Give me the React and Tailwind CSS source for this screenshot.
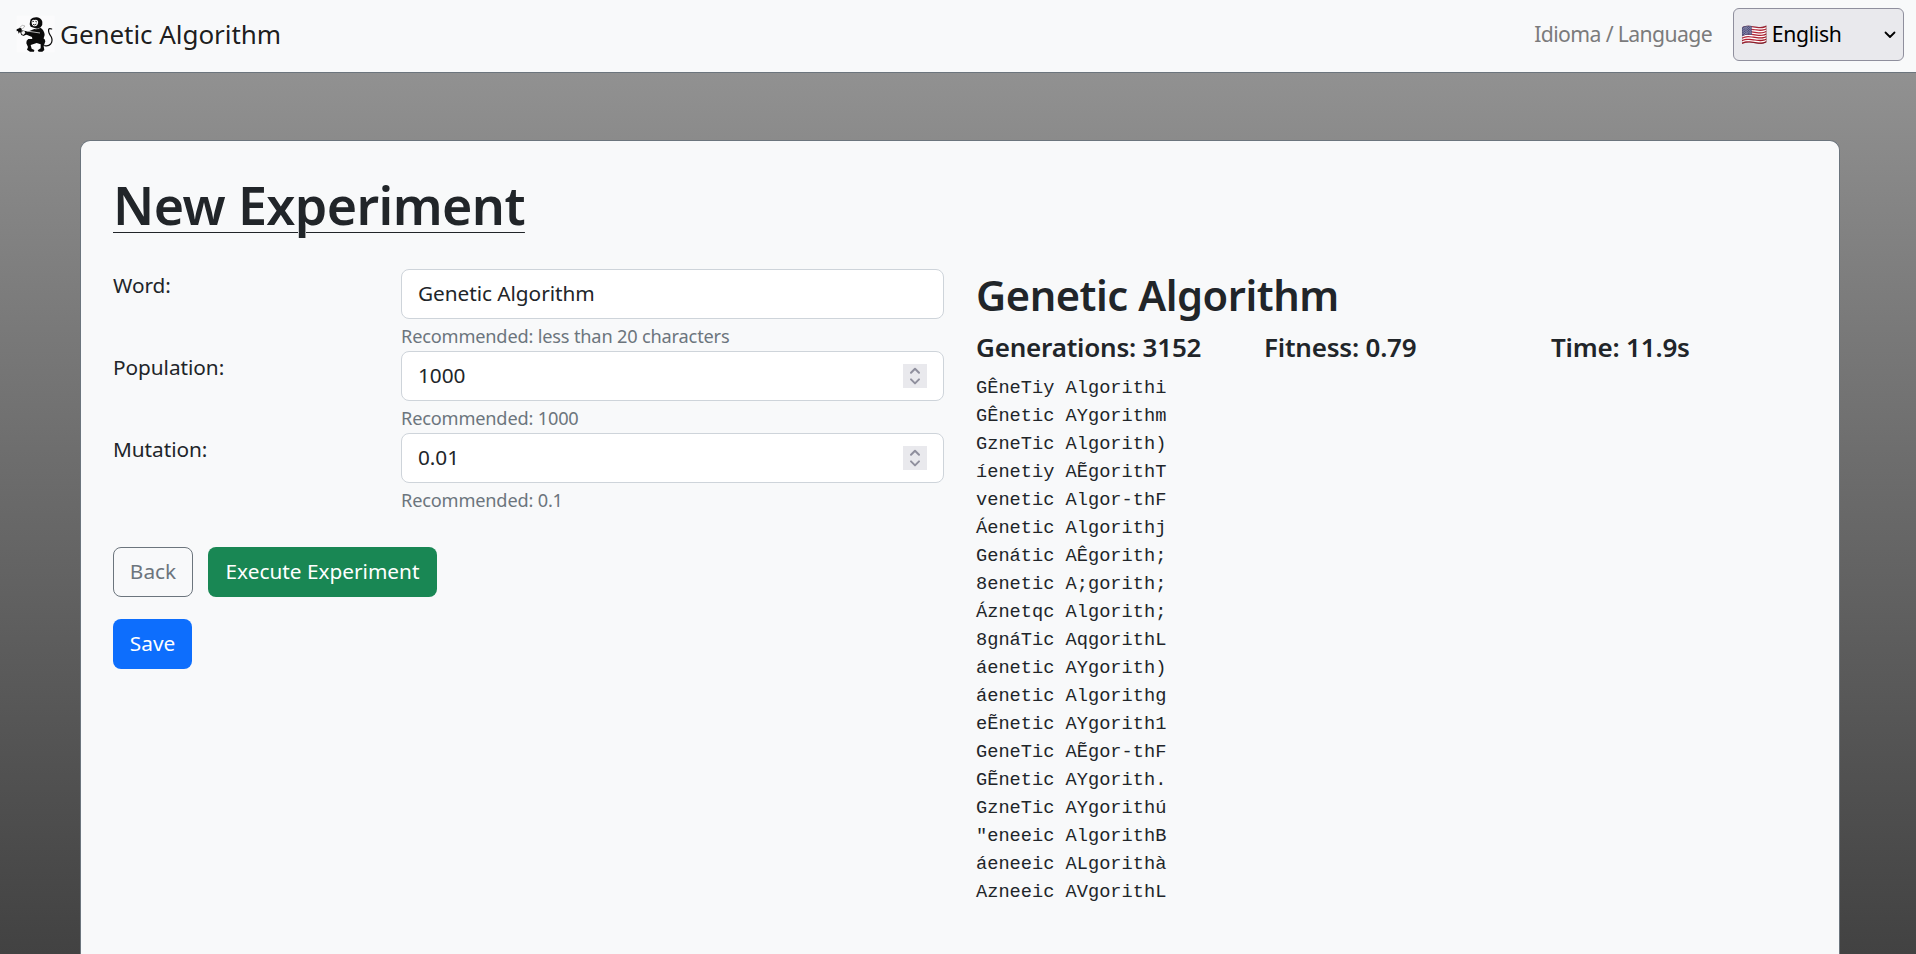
import React from "react";

const FIELDS = [
  { label: "Word:", value: "Genetic Algorithm", hint: "Recommended: less than 20 characters" },
  { label: "Population:", value: "1000", hint: "Recommended: 1000", spinner: true },
  { label: "Mutation:", value: "0.01", hint: "Recommended: 0.1", spinner: true },
];

const CANDIDATES = [
  "GÊneTiy Algorithi",
  "GÊnetic AYgorithm",
  "GzneTic Algorith)",
  "íenetiy AẼgorithT",
  "venetic Algor-thF",
  "Áenetic Algorithj",
  "Genátic AÊgorith;",
  "8enetic A;gorith;",
  "Áznetqc Algorith;",
  "8gnáTic AqgorithL",
  "áenetic AYgorith)",
  "áenetic Algorithg",
  "eẼnetic AYgorith1",
  "GeneTic AẼgor-thF",
  "GẼnetic AYgorith.",
  "GzneTic AYgorithú",
  "\"eneeic AlgorithB",
  "áeneeic ALgorithà",
  "Azneeic AVgorithL",
];

function MonkeyLogo() {
  return (
    <svg viewBox="18 20 120 120" className="h-10 w-10 shrink-0" aria-hidden="true">
      <rect x="20" y="22" width="114" height="110" fill="#fbfbfc" />
      <path d="M62 33 Q69 26 81 27 Q94 29 97 40 Q99 50 92 57 Q84 63 76 60 L62 55 L59 48 L60 41 Z" fill="#0a0a0a" />
      <path d="M65 38 Q69 33 74 35 Q80 33 84 38 Q86 44 82 50 Q77 56 70 53 Q65 50 65 44 Z" fill="#f8f8f8" />
      <path d="M67 40 L72 39 M76 39 L81 41 M69 48 Q74 52 79 47" stroke="#0a0a0a" strokeWidth="2.4" fill="none" />
      <path d="M73 62 Q82 64 91 58 Q103 65 104 80 L100 93 L92 100 L68 99 L66 86 L50 79 L44 81 L42 74 L60 67 Z" fill="#0a0a0a" />
      <path d="M20 63 L31 58 L36 62 L34 66 L100 78 L96 84 L50 74 L42 83 L34 80 L30 70 L26 76 L24 68 L20 69 Z" fill="#0a0a0a" />
      <path d="M50 68 L90 74" stroke="#f0f0f0" strokeWidth="2.2" />
      <path d="M28 58 L37 51 L45 53 L37 62" stroke="#9a9a9a" strokeWidth="2" fill="none" />
      <path d="M34 70 L43 67 L46 74 L40 80 L35 77 Z" fill="#f3f3f3" />
      <path d="M68 92 L55 92 Q48 96 49 105 L54 116 L51 124 L60 130 L72 130 L73 125 L65 121 L62 110 L80 104 L92 108 L92 120 L83 126 L86 130 L97 130 L103 125 L101 114 L106 99 Q106 92 98 89 Z" fill="#0a0a0a" />
      <path d="M104 112 Q115 115 122 107 Q129 98 124 86 Q114 72 116 63 Q118 59 125 62" stroke="#0a0a0a" strokeWidth="3.6" fill="none" strokeLinecap="round" />
    </svg>
  );
}

function Spinner() {
  return (
    <span className="flex h-6 w-6 items-center justify-center bg-[#e9e9ed]">
      <svg viewBox="0 0 24 24" className="h-6 w-6" fill="none" stroke="#8f8f9d" strokeWidth="2" strokeLinecap="round" strokeLinejoin="round">
        <path d="M8 8.8 12 4.8 16 8.8M8 15.4 12 19.4 16 15.4" />
      </svg>
    </span>
  );
}

function Field({ label, value, hint, spinner }) {
  return (
    <div className="grid h-[82px] grid-cols-[288px_543px]">
      <div className="tracking-[-0.05px]">{label}</div>
      <div>
        <div className="flex h-[50px] items-center justify-between rounded-lg border border-[#ced4da] bg-white pr-4 pl-4">
          <span className="-mt-0.5 tracking-[-0.05px]">{value}</span>
          {spinner && <Spinner />}
        </div>
        <div className="pt-px text-[18.2px] leading-8 tracking-[-0.18px] text-[#6c757d]">{hint}</div>
      </div>
    </div>
  );
}

export default function App() {
  return (
    <div className="flex h-[954px] flex-col overflow-hidden bg-linear-to-b from-[#989898] to-[#424242] font-['Noto_Sans',sans-serif] text-[20.8px] leading-8 text-[#212529]">
      <nav className="flex h-[73px] shrink-0 items-start justify-between border-b border-[#6c757d] bg-[#f8f9fa] pt-2 pr-3 pl-4">
        <div className="flex h-[53px] items-center">
          <MonkeyLogo />
          <span className="-mt-0.5 ml-1 text-[26px] tracking-[-0.05px] text-black/90">Genetic Algorithm</span>
        </div>
        <div className="flex h-[53px] items-center">
          <span className="mr-[21px] -mt-0.5 text-[21.2px] tracking-[-0.61px] text-[#7b7b7c]">Idioma / Language</span>
          <button className="flex h-[53px] w-[171px] items-center rounded-md border border-[#8f8f9d] bg-[#e9e9ed] pr-[7px] pl-[7px] text-black">
            <span className="-mt-0.5 text-[21.2px] tracking-[-0.35px] whitespace-nowrap">🇺🇸 English</span>
            <svg viewBox="0 0 12 8" className="ml-auto h-2 w-3" fill="none" stroke="#000" strokeWidth="1.8" strokeLinecap="round" strokeLinejoin="round">
              <path d="M1.5 1.5 6 6 10.5 1.5" />
            </svg>
          </button>
        </div>
      </nav>

      <main className="mt-[67px] ml-20 w-[1760px] grow rounded-t-[10px] border border-b-0 border-[#6c757d] bg-[#f8f9fa] px-8 pt-8">
        <h1 className="text-[52px] leading-[64px] font-semibold tracking-[-0.6px] underline decoration-1 underline-offset-[7px]">
          New Experiment
        </h1>
        <div className="mt-8 flex gap-8">
          <section className="w-[831px]">
            {FIELDS.map((f) => (
              <Field key={f.label} {...f} />
            ))}
            <div className="mt-8 flex gap-[15px]">
              <button className="h-[50px] w-20 rounded-lg border border-[#6c757d] pb-0.5 text-[#6c757d]">Back</button>
              <button className="h-[50px] w-[229px] rounded-lg bg-[#198754] pb-0.5 text-white">Execute Experiment</button>
            </div>
            <button className="mt-[22px] h-[50px] w-[79px] rounded-lg bg-[#0d6efd] pb-0.5 text-white">Save</button>
          </section>
          <section>
            <h2 className="pt-px text-[41.6px] leading-[51px] font-semibold tracking-[-0.45px]">Genetic Algorithm</h2>
            <div className="mt-2.5 grid grid-cols-[288px_287px_288px] text-[26px] font-semibold tracking-[-0.2px]">
              <span>Generations: 3152</span>
              <span>Fitness: 0.79</span>
              <span>Time: 11.9s</span>
            </div>
            <div className="mt-[11px] font-['Liberation_Mono',monospace] text-[18.67px] leading-7 whitespace-pre">
              {CANDIDATES.map((c) => (
                <div key={c}>{c}</div>
              ))}
            </div>
          </section>
        </div>
      </main>
    </div>
  );
}
